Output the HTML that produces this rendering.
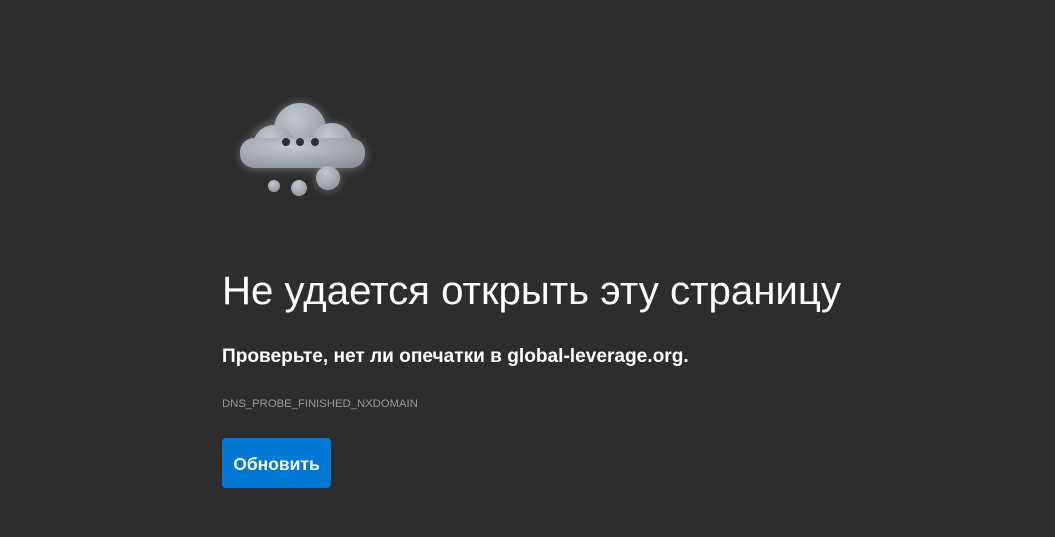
<!DOCTYPE html>
<html><head><meta charset="utf-8"><style>
body{margin:0;width:1055px;height:537px;background:#2d2d2d;font-family:"Liberation Sans",sans-serif;overflow:hidden;position:relative}
h1{position:absolute;left:222px;top:268px;margin:0;font-size:40.2px;font-weight:normal;color:#fff;white-space:nowrap}
.sub{position:absolute;left:222px;top:346px;font-size:19.1px;font-weight:bold;color:#fff;white-space:nowrap}
.code{position:absolute;left:222px;top:398px;font-size:11.3px;color:#999}
.btn{position:absolute;left:222px;top:438px;width:109px;height:50px;background:#0078d4;border-radius:4px;color:#fff;font-weight:bold;font-size:17.5px;line-height:53px;text-align:center}
</style></head><body>
<svg style="position:absolute;left:220px;top:90px" width="160" height="120" viewBox="0 0 160 120">
<defs>
<radialGradient id="g" cx="40%" cy="30%" r="80%"><stop offset="0" stop-color="#c4c8ce"/><stop offset="1" stop-color="#8d9199"/></radialGradient>
<filter id="f" x="-30%" y="-30%" width="160%" height="160%"><feGaussianBlur stdDeviation="4"/></filter>
</defs>
<g fill="#ffffff" opacity="0.25" filter="url(#f)">
<circle cx="80" cy="40" r="28"/><circle cx="52" cy="55" r="22"/><circle cx="113" cy="55" r="22"/><rect x="20" y="48" width="126" height="32" rx="14"/><circle cx="108" cy="88" r="13"/>
</g>
<g fill="url(#g)">
<circle cx="80" cy="39" r="26"/><circle cx="54" cy="56" r="21"/><circle cx="112" cy="54" r="21"/><rect x="20" y="48" width="125" height="30" rx="14"/>
<circle cx="54" cy="96" r="6"/><circle cx="79" cy="98" r="8"/><circle cx="108" cy="88" r="12"/>
</g>
<g fill="#2f3032"><circle cx="66" cy="52" r="4"/><circle cx="80" cy="52" r="4"/><circle cx="95" cy="52" r="4"/></g>
</svg>
<h1>Не удается открыть эту страницу</h1>
<div class="sub">Проверьте, нет ли опечатки в global-leverage.org.</div>
<div class="code">DNS_PROBE_FINISHED_NXDOMAIN</div>
<div class="btn">Обновить</div>
</body></html>
